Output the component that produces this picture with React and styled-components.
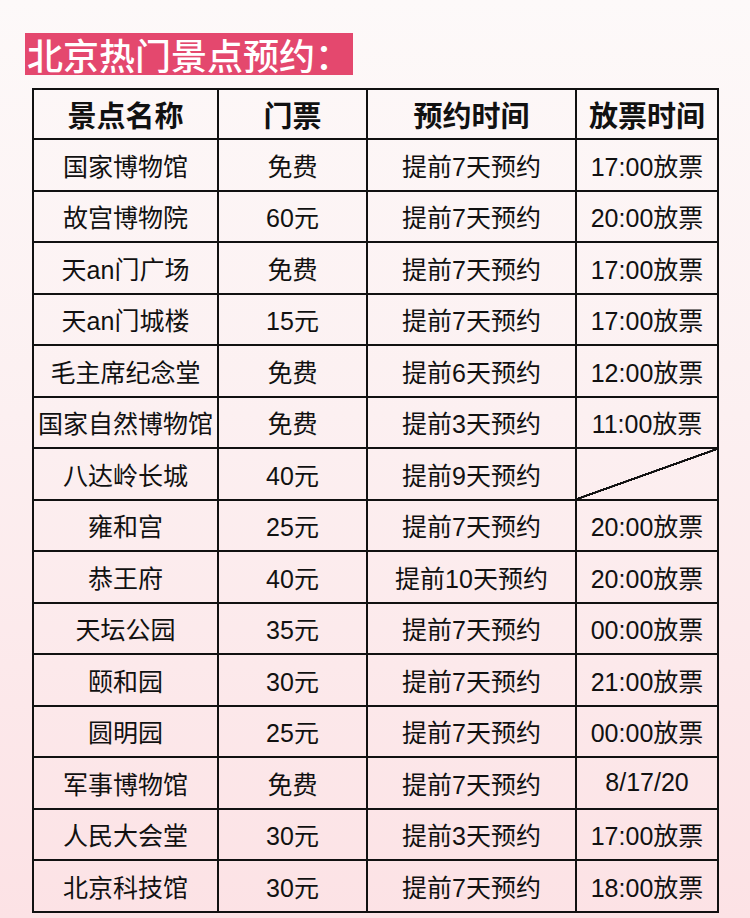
import styled, { createGlobalStyle } from "styled-components";

const GlobalStyle = createGlobalStyle`
  html, body {
    margin: 0;
    padding: 0;
  }
  body {
    font-family: "Liberation Sans", "Noto Sans CJK SC", "Noto Sans", sans-serif;
    color: #111;
  }
`;

const Page = styled.main`
  width: 750px;
  height: 918px;
  box-sizing: border-box;
  padding: 33px 0 0 25px;
  background: linear-gradient(180deg, #fdf9f9 0%, #fcf0f1 45%, #fce2e5 100%);
  overflow: hidden;
`;

const Title = styled.h1`
  display: inline-block;
  margin: 0;
  padding: 0 2px 0 2px;
  height: 42px;
  line-height: 42px;
  background: #e4486e;
  color: #fff;
  font-family: "Noto Sans CJK SC", sans-serif;
  font-size: 36px;
  font-weight: 500;
`;

const Table = styled.table`
  margin: 13px 0 0 7px;
  width: 685px;
  border-collapse: collapse;
  table-layout: fixed;
  border: 2px solid #111;
`;

const Head = styled.th`
  height: 50px;
  padding: 0;
  border: 2px solid #111;
  font-size: 29px;
  font-weight: 700;
  text-align: center;
  box-sizing: border-box;
`;

const Cell = styled.td`
  height: 49.5px;
  padding: 0;
  border: 2px solid #111;
  font-size: 25px;
  font-weight: 400;
  text-align: center;
  white-space: nowrap;
  background: ${(p) =>
    p.$crossed
      ? "linear-gradient(to bottom right, transparent calc(50% - 1.2px), #111 calc(50% - 1px), #111 calc(50% + 1px), transparent calc(50% + 1.2px))"
      : "transparent"};
`;

const columns = [
  { label: "景点名称", width: 185 },
  { label: "门票", width: 149 },
  { label: "预约时间", width: 209 },
  { label: "放票时间", width: 142 },
];

const rows = [
  ["国家博物馆", "免费", "提前7天预约", "17:00放票"],
  ["故宫博物院", "60元", "提前7天预约", "20:00放票"],
  ["天an门广场", "免费", "提前7天预约", "17:00放票"],
  ["天an门城楼", "15元", "提前7天预约", "17:00放票"],
  ["毛主席纪念堂", "免费", "提前6天预约", "12:00放票"],
  ["国家自然博物馆", "免费", "提前3天预约", "11:00放票"],
  ["八达岭长城", "40元", "提前9天预约", null],
  ["雍和宫", "25元", "提前7天预约", "20:00放票"],
  ["恭王府", "40元", "提前10天预约", "20:00放票"],
  ["天坛公园", "35元", "提前7天预约", "00:00放票"],
  ["颐和园", "30元", "提前7天预约", "21:00放票"],
  ["圆明园", "25元", "提前7天预约", "00:00放票"],
  ["军事博物馆", "免费", "提前7天预约", "8/17/20"],
  ["人民大会堂", "30元", "提前3天预约", "17:00放票"],
  ["北京科技馆", "30元", "提前7天预约", "18:00放票"],
];

export default function App() {
  return (
    <>
      <GlobalStyle />
      <Page>
        <Title>北京热门景点预约：</Title>
        <Table>
          <colgroup>
            {columns.map((c) => (
              <col key={c.label} style={{ width: c.width }} />
            ))}
          </colgroup>
          <thead>
            <tr>
              {columns.map((c) => (
                <Head key={c.label}>{c.label}</Head>
              ))}
            </tr>
          </thead>
          <tbody>
            {rows.map((r) => (
              <tr key={r[0]}>
                {r.map((v, i) =>
                  v === null ? (
                    <Cell key={i} $crossed />
                  ) : (
                    <Cell key={i}>{v}</Cell>
                  )
                )}
              </tr>
            ))}
          </tbody>
        </Table>
      </Page>
    </>
  );
}
